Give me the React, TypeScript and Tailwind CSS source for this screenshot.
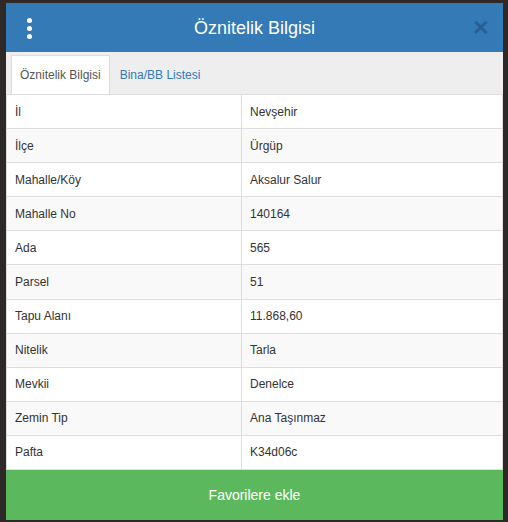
import React from "react";

const rows: [string, string][] = [
  ["İl", "Nevşehir"],
  ["İlçe", "Ürgüp"],
  ["Mahalle/Köy", "Aksalur Salur"],
  ["Mahalle No", "140164"],
  ["Ada", "565"],
  ["Parsel", "51"],
  ["Tapu Alanı", "11.868,60"],
  ["Nitelik", "Tarla"],
  ["Mevkii", "Denelce"],
  ["Zemin Tip", "Ana Taşınmaz"],
  ["Pafta", "K34d06c"],
];

const App: React.FC = () => {
  return (
    <div
      className="w-[508px] h-[522px] bg-[#2e2926] overflow-hidden pt-[3px] pl-[6px]"
      style={{ fontFamily: '"Liberation Sans", Arial, sans-serif' }}
    >
      <div className="w-[497px] h-[517px] flex flex-col bg-white">
        {/* Header */}
        <div className="h-[49px] bg-[#337ab7] flex items-center relative shrink-0">
          <div className="absolute left-[21px] top-[15px] flex flex-col gap-[3px]">
            <span className="w-[5px] h-[5px] rounded-full bg-white" />
            <span className="w-[5px] h-[5px] rounded-full bg-white" />
            <span className="w-[5px] h-[5px] rounded-full bg-white" />
          </div>
          <h3 className="flex-1 text-center text-white text-[18px] leading-none">
            Öznitelik Bilgisi
          </h3>
          <span className="absolute right-[13px] top-[14px] text-[#285f92] text-[21px] font-bold leading-none">
            ✕
          </span>
        </div>

        {/* Tabs */}
        <div className="h-[42px] bg-[#eeeeee] flex items-end px-[5px] shrink-0">
          <div className="h-[39px] px-[8px] flex items-center bg-white border border-[#dddddd] border-b-0 text-[12px] text-[#555555]">
            Öznitelik Bilgisi
          </div>
          <div className="h-[39px] px-[10px] flex items-center text-[12px] text-[#337ab7]">
            Bina/BB Listesi
          </div>
        </div>

        {/* Table */}
        <table className="w-full border-collapse text-[12px] text-[#333333] border border-[#dddddd]">
          <tbody>
            {rows.map(([k, v], i) => (
              <tr key={k} className={i % 2 === 1 ? "bg-[#f9f9f9]" : "bg-white"}>
                <td className="w-[235px] h-[34.1px] px-[8px] border border-[#dddddd] align-middle">
                  {k}
                </td>
                <td className="h-[34.1px] px-[8px] border border-[#dddddd] align-middle">
                  {v}
                </td>
              </tr>
            ))}
          </tbody>
        </table>

        {/* Footer button */}
        <button className="flex-1 bg-[#5cb85c] text-white text-[14px]">
          Favorilere ekle
        </button>
      </div>
    </div>
  );
};

export default App;
